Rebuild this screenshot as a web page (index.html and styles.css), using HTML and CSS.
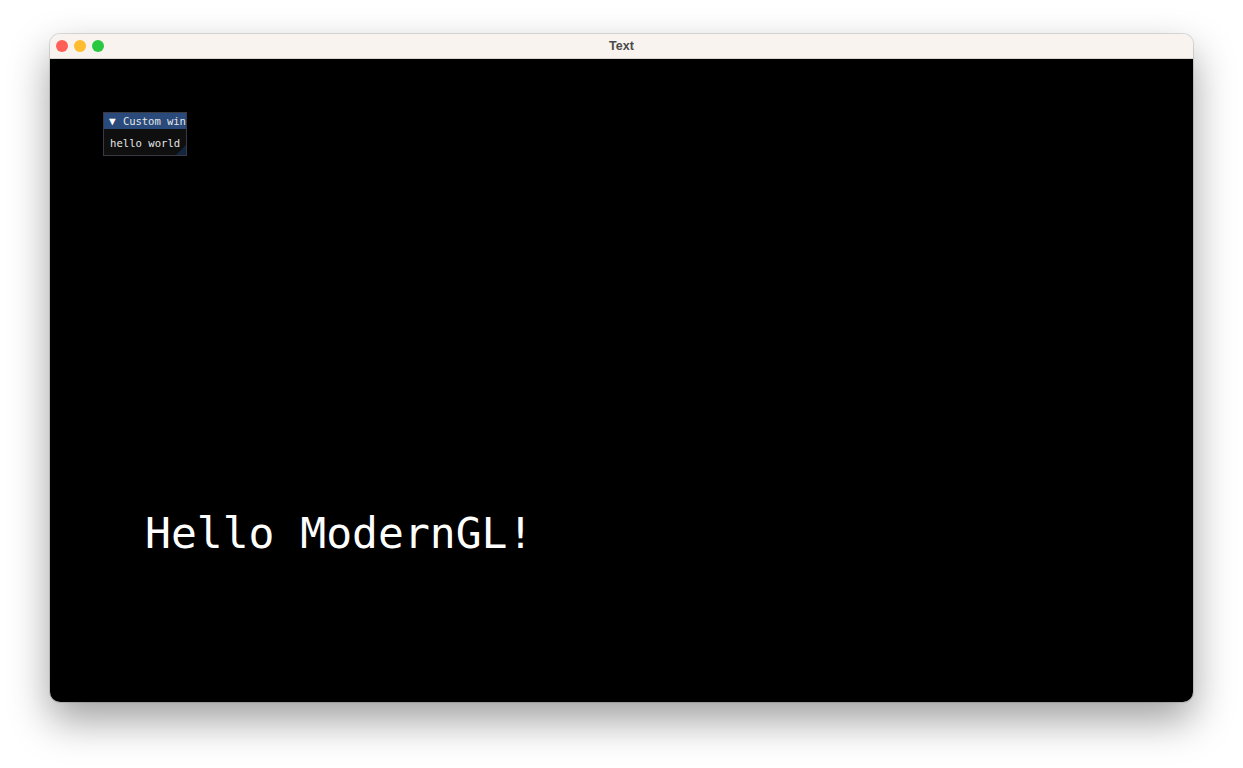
FILE: index.html
```html
<!DOCTYPE html>
<html>
<head>
<meta charset="utf-8">
<link rel="stylesheet" href="styles.css">
</head>
<body>
<div class="window">
  <div class="titlebar">
    <div class="lights">
      <span class="light red"></span>
      <span class="light yellow"></span>
      <span class="light green"></span>
    </div>
    <div class="title">Text</div>
  </div>
  <div class="canvas">
    <div class="imgui">
      <div class="imgui-title"><span class="tri">▼</span>Custom win</div>
      <div class="imgui-body">hello world</div>
      <div class="grip"></div>
    </div>
    <div class="hello">Hello ModernGL!</div>
  </div>
</div>
</body>
</html>
```
FILE: styles.css
```css
html, body {
  margin: 0;
  padding: 0;
  background: #ffffff;
}
body {
  width: 1243px;
  height: 768px;
  overflow: hidden;
  padding-top: 34px;
  box-sizing: border-box;
}
.window {
  margin-left: 50px;
  width: 1143px;
  height: 668px;
  border-radius: 10px;
  overflow: hidden;
  box-shadow: 0 18px 40px rgba(0,0,0,0.38), 0 0 0 1px rgba(0,0,0,0.12);
  display: flex;
  flex-direction: column;
}
.titlebar {
  height: 25px;
  background: #f8f3ee;
  position: relative;
  display: flex;
  align-items: center;
  justify-content: center;
  border-bottom: 1px solid #d8d4d0;
  box-sizing: border-box;
  flex: none;
}
.lights {
  position: absolute;
  left: 6px;
  top: 6px;
  display: flex;
  gap: 6px;
}
.light {
  width: 12px;
  height: 12px;
  border-radius: 50%;
  display: block;
}
.red { background: #fe5f57; }
.yellow { background: #febc2e; }
.green { background: #28c840; }
.title {
  font-family: "Liberation Sans", Arial, sans-serif;
  font-weight: bold;
  font-size: 12.5px;
  color: #4a4a4a;
}
.canvas {
  flex: 1;
  background: #000000;
  position: relative;
}
.imgui {
  position: absolute;
  left: 53px;
  top: 53px;
  width: 82px;
  height: 42px;
  border: 1px solid #3a3a45;
  background: #0f0f0f;
  overflow: hidden;
  font-family: "DejaVu Sans Mono", monospace;
  font-size: 10.6px;
  color: #e6e6e6;
  box-sizing: content-box;
}
.imgui-title {
  height: 16px;
  line-height: 16px;
  background: #294a7a;
  white-space: nowrap;
  padding-left: 5px;
  letter-spacing: -0.1px;
}
.tri {
  font-size: 11px;
  display: inline-block;
  width: 14px;
  color: #ffffff;
}
.imgui-body {
  padding: 6px 0 0 6px;
  line-height: 16px;
  white-space: nowrap;
}
.grip {
  position: absolute;
  right: 0;
  bottom: 0;
  width: 0;
  height: 0;
  border-left: 10px solid transparent;
  border-bottom: 10px solid #13263f;
}
.hello {
  position: absolute;
  left: 95px;
  top: 449px;
  font-family: "DejaVu Sans Mono", monospace;
  font-size: 43px;
  color: #ffffff;
  white-space: nowrap;
  line-height: 50px;
}
```
